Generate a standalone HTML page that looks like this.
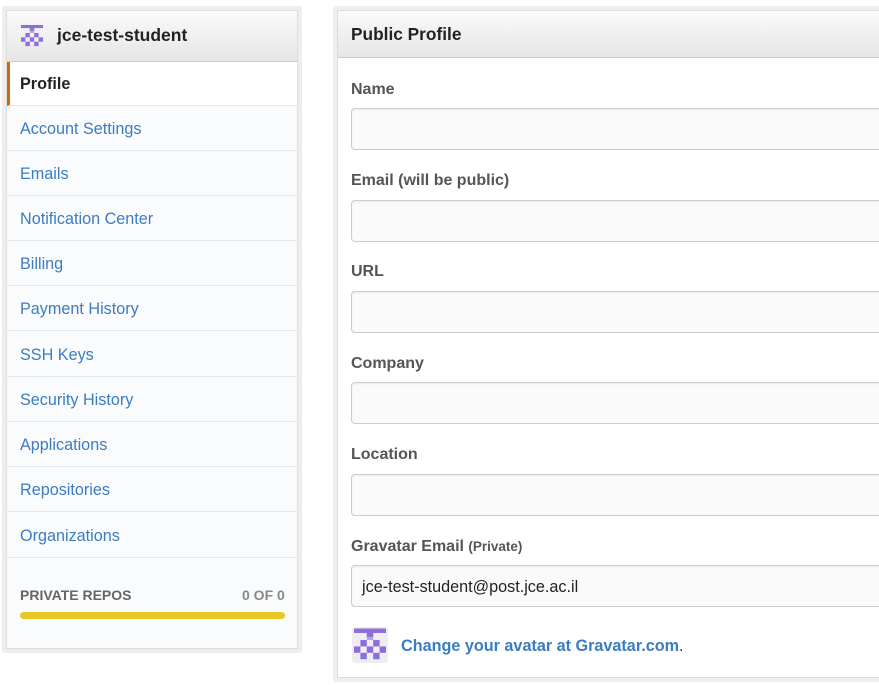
<!DOCTYPE html>
<html><head><style>
*{margin:0;padding:0;box-sizing:border-box}
body{width:879px;height:685px;background:#fff;font-family:"Liberation Sans",sans-serif;position:relative;overflow:hidden}
.abs{position:absolute}
.lp{left:2px;top:6px;width:300px;height:647px;background:#eee;border-radius:3px}
.lpi{left:6px;top:10px;width:292px;height:639px;background:#fafbfc;border:1px solid #ddd}
.hd{background:linear-gradient(#fafafa,#e6e6e6);border-bottom:1px solid #ccc}
.item{position:absolute;left:7px;width:290px;height:45px;border-bottom:1px solid #e8e8e8;color:#3b7dc0;font-size:16.2px;padding-left:13px;line-height:47px}
.rp{left:333px;top:6px;width:560px;height:676px;background:#eee;border-radius:3px}
.rpi{left:337px;top:10px;width:550px;height:668px;background:#fff;border:1px solid #ddd}
.lab{position:absolute;left:351px;font-size:16px;font-weight:bold;color:#555}
.inp{position:absolute;left:351px;width:540px;height:42px;border:1px solid #ccc;border-radius:4px;background:#fafafa;box-shadow:inset 0 1px 2px rgba(0,0,0,.06)}
</style></head><body>
<div class="abs lp"></div>
<div class="abs lpi"></div>
<div class="abs hd" style="left:7px;top:11px;width:290px;height:51px"></div>
<svg class="abs" style="left:21px;top:25px" width="22" height="22" viewBox="0 0 5 5"><g fill="#8e6fd9"><rect x="0" y="0" width="5" height="0.7"/><rect x="2" y="0.7" width="1" height="1.1" fill="#b5a3e8"/><rect x="2" y="0.7" width="1" height="0.6"/><rect x="1" y="1.8" width="1" height="1"/><rect x="3" y="1.8" width="1" height="1"/><rect x="0" y="2.8" width="1" height="1"/><rect x="2" y="2.8" width="1" height="1"/><rect x="4" y="2.8" width="1" height="1"/><rect x="1" y="3.8" width="1" height="1"/><rect x="3" y="3.8" width="1" height="1"/></g></svg>
<div class="abs" style="left:57px;top:25px;font-size:17.5px;font-weight:bold;color:#222">jce-test-student</div>
<div class="item" style="top:62px;height:44px;background:#fff;color:#222;font-weight:bold;border-left:3px solid #d26911;padding-left:10px;line-height:44px">Profile</div>
<div class="item" style="top:106px">Account Settings</div>
<div class="item" style="top:151px">Emails</div>
<div class="item" style="top:196px">Notification Center</div>
<div class="item" style="top:241px">Billing</div>
<div class="item" style="top:286px">Payment History</div>
<div class="item" style="top:332px">SSH Keys</div>
<div class="item" style="top:377px">Security History</div>
<div class="item" style="top:422px">Applications</div>
<div class="item" style="top:467px">Repositories</div>
<div class="item" style="top:513px">Organizations</div>
<div class="abs" style="left:20px;top:587px;font-size:14px;font-weight:bold;color:#666">PRIVATE REPOS</div>
<div class="abs" style="left:242px;top:587px;font-size:14px;font-weight:bold;color:#888">0 OF 0</div>
<div class="abs" style="left:20px;top:612px;width:265px;height:7px;border-radius:4px;background:#e8c824"></div>

<div class="abs rp"></div>
<div class="abs rpi"></div>
<div class="abs hd" style="left:338px;top:11px;width:541px;height:47px"></div>
<div class="abs" style="left:351px;top:24px;font-size:17.3px;font-weight:bold;color:#222">Public Profile</div>
<div class="lab" style="top:81px">Name</div>
<div class="inp" style="top:108px"></div>
<div class="lab" style="top:172px">Email (will be public)</div>
<div class="inp" style="top:200px"></div>
<div class="lab" style="top:263px">URL</div>
<div class="inp" style="top:291px"></div>
<div class="lab" style="top:355px">Company</div>
<div class="inp" style="top:382px"></div>
<div class="lab" style="top:446px">Location</div>
<div class="inp" style="top:474px"></div>
<div class="lab" style="top:538px">Gravatar Email <span style="font-size:13.5px">(Private)</span></div>
<div class="inp" style="top:565px;font-size:16.2px;color:#222;padding-left:10px;line-height:42px">jce-test-student@post.jce.ac.il</div>
<div class="abs" style="left:352px;top:627px;width:36px;height:36px;background:#eeeef2;border-radius:3px"></div>
<svg class="abs" style="left:354px;top:628px" width="32" height="33" viewBox="0 0 5 5"><g fill="#8e6fd9"><rect x="0" y="0" width="5" height="0.7"/><rect x="2" y="0.7" width="1" height="1.1" fill="#b5a3e8"/><rect x="2" y="0.7" width="1" height="0.6"/><rect x="1" y="1.8" width="1" height="1"/><rect x="3" y="1.8" width="1" height="1"/><rect x="0" y="2.8" width="1" height="1"/><rect x="2" y="2.8" width="1" height="1"/><rect x="4" y="2.8" width="1" height="1"/><rect x="1" y="3.8" width="1" height="1"/><rect x="3" y="3.8" width="1" height="1"/></g></svg>
<div class="abs" style="left:401px;top:637px;font-size:16.2px;font-weight:bold;color:#3b7dc0">Change your avatar at Gravatar.com<span style="color:#333;font-weight:normal">.</span></div>
</body></html>
